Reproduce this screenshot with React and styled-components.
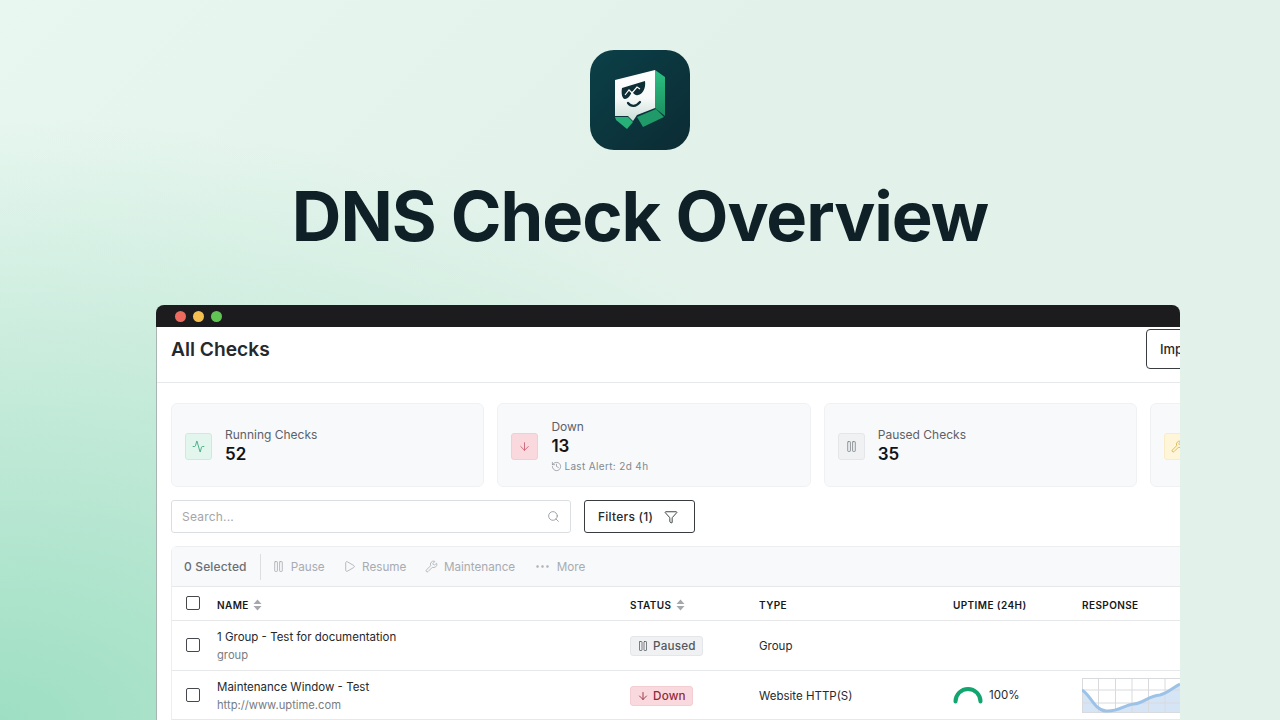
import React from 'react';
import styled, { createGlobalStyle } from 'styled-components';
import { Activity, ArrowDown, Pause, Wrench, History, Search as SearchIcon, Filter, Play, Ellipsis } from 'lucide-react';

const GlobalStyle = createGlobalStyle`
  html, body {
    margin: 0;
    padding: 0;
  }
  body {
    font-family: Inter, "Liberation Sans", sans-serif;
  }
  * {
    box-sizing: border-box;
  }
`;

const tones = {
  green: { bg: '#e3f6ee', border: '#cdebdd', color: '#2f9e74' },
  red: { bg: '#f9d9dd', border: '#f3cdd2', color: '#c4566a' },
  gray: { bg: '#f0f1f3', border: '#e4e6e9', color: '#7d8288' },
  yellow: { bg: '#fff5d9', border: '#faecc4', color: '#d9ae3f' },
};

const cards = [
  { label: 'Running Checks', value: '52', tone: 'green', Icon: Activity },
  { label: 'Down', value: '13', tone: 'red', Icon: ArrowDown, note: 'Last Alert: 2d 4h' },
  { label: 'Paused Checks', value: '35', tone: 'gray', Icon: Pause },
  { tone: 'yellow', Icon: Wrench },
];

const actions = [
  { label: 'Pause', Icon: Pause, size: 13 },
  { label: 'Resume', Icon: Play, size: 13 },
  { label: 'Maintenance', Icon: Wrench, size: 13 },
  { label: 'More', Icon: Ellipsis, size: 17 },
];

const Logo = () => (
  <LogoBox>
    <svg width="80" height="80" viewBox="0 0 80 80">
      <defs>
        <linearGradient id="face" x1="0" y1="0" x2="0" y2="1">
          <stop offset="0" stopColor="#ffffff" />
          <stop offset="0.55" stopColor="#f7faf9" />
          <stop offset="1" stopColor="#c9ded6" />
        </linearGradient>
        <linearGradient id="side" x1="0" y1="0" x2="0" y2="1">
          <stop offset="0" stopColor="#2cc083" />
          <stop offset="1" stopColor="#1c8f60" />
        </linearGradient>
      </defs>
      <path d="M55 10 L65 17 L65 56 L55 48 Z" fill="url(#side)" />
      <path d="M15 57 L28 57 L33 62 L27 69 L16 60 Z" fill="#27b078" />
      <path d="M37 57 L56 49 L64 57 L43 67 Z" fill="#1f9a68" />
      <path d="M15 20 L55 10 L55 48 L37 55 L33 61 L28 56 L15 56 Z" fill="url(#face)" />
      <path d="M22 28 L45 21 C46 28 43 34 38 35 C35 36 33 33 32 31 C31 35 28 39 25 39 C22 39 21 33 22 28 Z" fill="#0f2e35" />
      <path d="M25 35 L29 30 L32 33 L37 27 L40 29" fill="none" stroke="#ffffff" strokeWidth="1.2" />
      <path d="M28 43 C31 47 36 47 40 42" fill="none" stroke="#0f2e35" strokeWidth="2.2" strokeLinecap="round" />
    </svg>
  </LogoBox>
);

const SortMark = () => (
  <svg width="9" height="12" viewBox="0 0 9 12">
    <path d="M4.5 0.5 L8.5 5 L0.5 5 Z M4.5 11.5 L8.5 7 L0.5 7 Z" fill="#a4a8ad" />
  </svg>
);

const Gauge = () => (
  <svg width="30" height="18" viewBox="0 0 30 18">
    <path d="M2.5 15.5 A12.5 12.5 0 0 1 27.5 15.5" fill="none" stroke="#12a56f" strokeWidth="4" strokeLinecap="round" />
  </svg>
);

const Sparkline = () => (
  <SparkBox width="98" height="35" viewBox="0 0 98 35">
    <path d="M0 12 C8 16 12 32 24 33 C36 34 42 27 52 26 C62 25 66 18 78 17 C86 15 92 9 98 6 L98 35 L0 35 Z" fill="#d6e5f5" />
    <path d="M0.5 0V35M16.5 0V35M33.5 0V35M50 0V35M66.5 0V35M83 0V35M0 0.5H98M0 12H98M0 25H98M0 34.5H98" stroke="#d8dade" strokeWidth="1" fill="none" />
    <path d="M0 12 C8 16 12 32 24 33 C36 34 42 27 52 26 C62 25 66 18 78 17 C86 15 92 9 98 6" fill="none" stroke="#9cc2e8" strokeWidth="3" />
  </SparkBox>
);

const App = () => (
  <Page>
    <GlobalStyle />
    <Logo />
    <Title>DNS Check Overview</Title>
    <Browser>
      <TitleBar>
        <Dot color="#ec6a5e" />
        <Dot color="#f4bf4f" />
        <Dot color="#61c554" />
      </TitleBar>
      <Content>
        <Header>
          <Heading>All Checks</Heading>
          <ImportButton>Import</ImportButton>
        </Header>
        <Body>
          <Cards>
            {cards.map(({ label, value, tone, Icon, note }) => (
              <Card key={tone}>
                <CardIcon tone={tone}>
                  <Icon size={13} strokeWidth={1.5} />
                </CardIcon>
                {label && (
                  <div>
                    <CardLabel>{label}</CardLabel>
                    <CardValue>{value}</CardValue>
                    {note && (
                      <CardNote>
                        <History size={11} strokeWidth={1.5} />
                        {note}
                      </CardNote>
                    )}
                  </div>
                )}
              </Card>
            ))}
          </Cards>
          <FilterBar>
            <SearchBox>
              Search...
              <SearchIcon size={13} strokeWidth={1.5} color="#8d9196" />
            </SearchBox>
            <FilterButton>
              Filters (1)
              <Filter size={14} strokeWidth={1.5} />
            </FilterButton>
          </FilterBar>
          <Table>
            <Toolbar>
              <Selected>0 Selected</Selected>
              {actions.map(({ label, Icon, size }) => (
                <Action key={label}>
                  <Icon size={size} strokeWidth={1.5} />
                  {label}
                </Action>
              ))}
            </Toolbar>
            <HeadRow>
              <HeadCheck />
              <HeadCell>NAME <SortMark /></HeadCell>
              <HeadCell>STATUS <SortMark /></HeadCell>
              <HeadCell>TYPE</HeadCell>
              <HeadCell>UPTIME (24H)</HeadCell>
              <HeadCell>RESPONSE</HeadCell>
            </HeadRow>
            <Row>
              <Check />
              <RowCell>
                <RowName>1 Group - Test for documentation</RowName>
                <RowSub>group</RowSub>
              </RowCell>
              <RowCell>
                <Badge tone="gray"><Pause size={12} strokeWidth={1.5} />Paused</Badge>
              </RowCell>
              <RowCell>Group</RowCell>
              <div />
              <div />
            </Row>
            <Row>
              <Check />
              <RowCell>
                <RowName>Maintenance Window - Test</RowName>
                <RowSub>http://www.uptime.com</RowSub>
              </RowCell>
              <RowCell>
                <Badge tone="red"><ArrowDown size={12} strokeWidth={1.75} />Down</Badge>
              </RowCell>
              <RowCell>Website HTTP(S)</RowCell>
              <Uptime><Gauge />100%</Uptime>
              <Sparkline />
            </Row>
          </Table>
        </Body>
      </Content>
    </Browser>
  </Page>
);

const Page = styled.div`
  width: 1280px;
  height: 720px;
  overflow: hidden;
  padding-top: 50px;
  display: flex;
  flex-direction: column;
  align-items: center;
  background:
    radial-gradient(ellipse 1000px 600px at 0% 100%, #9edfc3 0%, rgba(158, 223, 195, 0) 100%),
    linear-gradient(135deg, #e8f7f0 0%, #e2f2ea 40%);
`;

const LogoBox = styled.div`
  width: 100px;
  height: 100px;
  flex-shrink: 0;
  border-radius: 24px;
  display: flex;
  align-items: center;
  justify-content: center;
  background: linear-gradient(135deg, #0b4048 0%, #0c2b33 100%);
`;

const Title = styled.h1`
  margin: 26px 0 0;
  height: 79px;
  line-height: 80px;
  font-size: 68.7px;
  font-weight: 700;
  letter-spacing: -1.05px;
  color: #0f2026;
  white-space: nowrap;
`;

const Browser = styled.div`
  width: 1024px;
  flex-shrink: 0;
  margin-top: 50px;
  align-self: flex-start;
  margin-left: 156px;
  border-radius: 8px 8px 0 0;
  overflow: hidden;
`;

const TitleBar = styled.div`
  height: 22px;
  padding-left: 19px;
  display: flex;
  align-items: center;
  gap: 7px;
  background: #1c1c1e;
`;

const Dot = styled.span`
  width: 11px;
  height: 11px;
  border-radius: 50%;
  background: ${props => props.color};
`;

const Content = styled.div`
  background: #fff;
  border-left: 1px solid #a9b5b0;
`;

const Header = styled.div`
  height: 56px;
  padding: 2px 14px 0;
  display: flex;
  justify-content: space-between;
  align-items: flex-start;
  border-bottom: 1px solid #e6e8ea;
`;

const Heading = styled.div`
  line-height: 41px;
  font-size: 19.2px;
  font-weight: 600;
  color: #26292c;
`;

const ImportButton = styled.div`
  width: 80px;
  height: 40px;
  margin-right: -60px;
  padding-left: 13px;
  line-height: 38px;
  font-size: 13px;
  font-weight: 500;
  color: #26292c;
  border: 1px solid #3a3d40;
  border-radius: 4px;
  flex-shrink: 0;
`;

const Body = styled.div`
  padding: 20px 0 0 14px;
`;

const Cards = styled.div`
  display: flex;
  gap: 13px;
  width: 1400px;
`;

const Card = styled.div`
  width: 313.4px;
  height: 84px;
  padding: 2px 0 0 13px;
  display: flex;
  align-items: center;
  gap: 13px;
  background: #f8f9fb;
  border: 1px solid #f0f1f3;
  border-radius: 6px;
`;

const CardIcon = styled.div`
  width: 27px;
  height: 27px;
  flex-shrink: 0;
  display: flex;
  align-items: center;
  justify-content: center;
  border-radius: 3px;
  background: ${props => tones[props.tone].bg};
  border: 1px solid ${props => tones[props.tone].border};
  color: ${props => tones[props.tone].color};
`;

const CardLabel = styled.div`
  font-size: 12px;
  line-height: 16px;
  color: #5c6166;
`;

const CardValue = styled.div`
  font-size: 17px;
  line-height: 22px;
  font-weight: 600;
  color: #111416;
`;

const CardNote = styled.div`
  margin-top: 3px;
  display: flex;
  align-items: center;
  gap: 2px;
  font-size: 10px;
  line-height: 13px;
  letter-spacing: 0.35px;
  color: #84898e;
`;

const FilterBar = styled.div`
  margin-top: 13px;
  display: flex;
  gap: 13px;
`;

const SearchBox = styled.div`
  width: 400px;
  height: 33px;
  padding: 0 10px;
  display: flex;
  align-items: center;
  justify-content: space-between;
  font-size: 12px;
  letter-spacing: 0.2px;
  color: #a2a6aa;
  border: 1px solid #dcdfe2;
  border-radius: 3px;
`;

const FilterButton = styled.div`
  width: 111px;
  height: 33px;
  padding-left: 13px;
  display: flex;
  align-items: center;
  gap: 11px;
  font-size: 12px;
  font-weight: 500;
  letter-spacing: 0.25px;
  color: #26292c;
  border: 1px solid #3a3d40;
  border-radius: 3px;
`;

const Table = styled.div`
  margin-top: 13px;
  width: 1040px;
  border-left: 1px solid #eceef0;
  border-top: 1px solid #eceef0;
  border-radius: 6px 0 0 0;
`;

const Toolbar = styled.div`
  height: 40px;
  padding-left: 12px;
  display: flex;
  align-items: center;
  background: #f8f9fb;
  border-bottom: 1px solid #e6e8ea;
`;

const Selected = styled.div`
  height: 26px;
  padding-right: 13px;
  margin-right: 11px;
  line-height: 26px;
  font-size: 12px;
  font-weight: 500;
  letter-spacing: 0.15px;
  color: #6a6f74;
  border-right: 1px solid #dcdfe2;
`;

const Action = styled.div`
  margin-right: 18.5px;
  display: flex;
  align-items: center;
  gap: 6px;
  font-size: 11.7px;
  color: #a8acb0;
`;

const columns = `
  display: grid;
  grid-template-columns: 31px 413px 129px 194px 129px 1fr;
  align-items: center;
  padding-left: 14px;
  border-bottom: 1px solid #e6e8ea;
`;

const HeadRow = styled.div`
  ${columns}
  height: 34px;
`;

const Row = styled.div`
  ${columns}
  height: 49.5px;
`;

const Check = styled.span`
  width: 14px;
  height: 14px;
  border: 1px solid #45484c;
  border-radius: 2px;
`;

const HeadCheck = styled(Check)`
  margin-top: -2px;
`;

const HeadCell = styled.div`
  display: flex;
  align-items: center;
  gap: 4.5px;
  padding-top: 2px;
  font-size: 10px;
  font-weight: 600;
  letter-spacing: 0.4px;
  color: #16191b;
`;

const RowCell = styled.div`
  padding-top: 2px;
  font-size: 11.5px;
  color: #26292c;
`;

const RowName = styled.div`
  font-size: 11.5px;
  line-height: 16px;
  color: #26292c;
`;

const RowSub = styled.div`
  margin-top: 2px;
  font-size: 11.2px;
  line-height: 16px;
  color: #777c81;
`;

const Badge = styled.span`
  display: inline-flex;
  align-items: center;
  gap: 4px;
  height: 20px;
  padding: 0 6px;
  font-size: 11.7px;
  font-weight: 500;
  letter-spacing: 0.2px;
  border-radius: 3px;
  background: ${props => tones[props.tone].bg};
  border: 1px solid ${props => tones[props.tone].border};
  color: ${props => (props.tone === 'red' ? '#8f2a3c' : '#53585d')};
`;

const Uptime = styled.div`
  display: flex;
  align-items: center;
  gap: 6px;
  font-size: 11.5px;
  color: #26292c;
`;

const SparkBox = styled.svg`
  margin-top: 2px;
`;

export default App;
